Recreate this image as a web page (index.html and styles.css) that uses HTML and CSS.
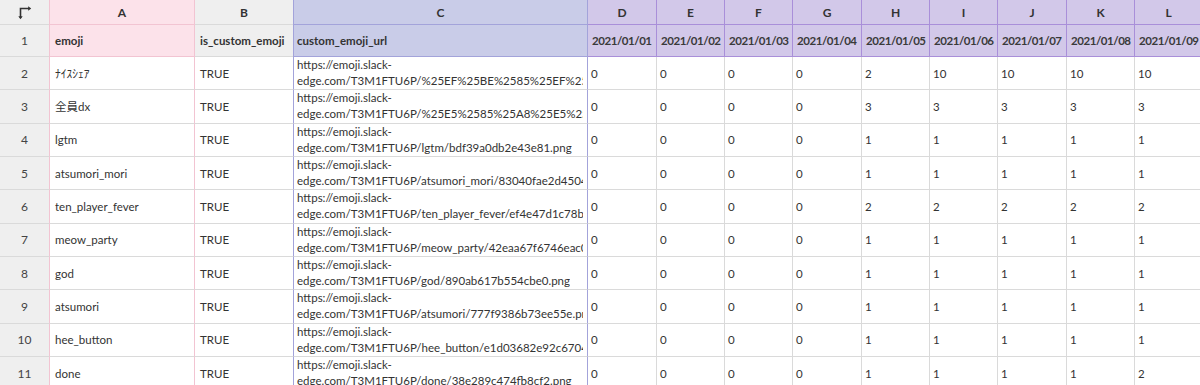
FILE: index.html
```html
<!DOCTYPE html>
<html lang="ja">
<head>
<meta charset="utf-8">
<title>emoji sheet</title>
<link rel="stylesheet" href="styles.css">
</head>
<body>
<div class="sheet">
  <div class="row colhead">
    <div class="cell rh corner"><svg width="14" height="14" viewBox="0 0 14 14"><path d="M2.5 12V2.5H11" fill="none" stroke="#333" stroke-width="1.6"/><path d="M0.3 10.2L2.5 13.2L4.7 10.2Z" fill="#333"/><path d="M10.2 0.3L13.2 2.5L10.2 4.7Z" fill="#333"/></svg></div>
    <div class="cell ca c-hd">A</div>
    <div class="cell cb c-hd">B</div>
    <div class="cell cc c-hd">C</div>
    <div class="cell cd c-hd">D</div>
    <div class="cell cd c-hd">E</div>
    <div class="cell cd c-hd">F</div>
    <div class="cell cd c-hd">G</div>
    <div class="cell cd c-hd">H</div>
    <div class="cell cd c-hd">I</div>
    <div class="cell cd c-hd">J</div>
    <div class="cell cd c-hd">K</div>
    <div class="cell cd c-hd">L</div>
  </div>
  <div class="row first">
    <div class="cell rh">1</div>
    <div class="cell ca hd">emoji</div>
    <div class="cell cb hd">is_custom_emoji</div>
    <div class="cell cc hd">custom_emoji_url</div>
    <div class="cell cd hd date">2021/01/01</div>
    <div class="cell cd hd date">2021/01/02</div>
    <div class="cell cd hd date">2021/01/03</div>
    <div class="cell cd hd date">2021/01/04</div>
    <div class="cell cd hd date">2021/01/05</div>
    <div class="cell cd hd date">2021/01/06</div>
    <div class="cell cd hd date">2021/01/07</div>
    <div class="cell cd hd date">2021/01/08</div>
    <div class="cell cd hd date">2021/01/09</div>
  </div>
  <div class="row">
    <div class="cell rh">2</div>
    <div class="cell ca">ﾅｲｽｼｪｱ</div>
    <div class="cell cb">TRUE</div>
    <div class="cell cc url"><span>https://emoji.slack-</span><span>edge.com/T3M1FTU6P/%25EF%25BE%2585%25EF%25BD%25B2%25EF%25BD%25BD.png</span></div>
    <div class="cell cd">0</div><div class="cell cd">0</div><div class="cell cd">0</div><div class="cell cd">0</div><div class="cell cd">2</div><div class="cell cd">10</div><div class="cell cd">10</div><div class="cell cd">10</div><div class="cell cd">10</div>
  </div>
  <div class="row">
    <div class="cell rh">3</div>
    <div class="cell ca">全員dx</div>
    <div class="cell cb">TRUE</div>
    <div class="cell cc url"><span>https://emoji.slack-</span><span>edge.com/T3M1FTU6P/%25E5%2585%25A8%25E5%2593%25A1dx.png</span></div>
    <div class="cell cd">0</div><div class="cell cd">0</div><div class="cell cd">0</div><div class="cell cd">0</div><div class="cell cd">3</div><div class="cell cd">3</div><div class="cell cd">3</div><div class="cell cd">3</div><div class="cell cd">3</div>
  </div>
  <div class="row">
    <div class="cell rh">4</div>
    <div class="cell ca">lgtm</div>
    <div class="cell cb">TRUE</div>
    <div class="cell cc url"><span>https://emoji.slack-</span><span>edge.com/T3M1FTU6P/lgtm/bdf39a0db2e43e81.png</span></div>
    <div class="cell cd">0</div><div class="cell cd">0</div><div class="cell cd">0</div><div class="cell cd">0</div><div class="cell cd">1</div><div class="cell cd">1</div><div class="cell cd">1</div><div class="cell cd">1</div><div class="cell cd">1</div>
  </div>
  <div class="row">
    <div class="cell rh">5</div>
    <div class="cell ca">atsumori_mori</div>
    <div class="cell cb">TRUE</div>
    <div class="cell cc url"><span>https://emoji.slack-</span><span>edge.com/T3M1FTU6P/atsumori_mori/83040fae2d450402.png</span></div>
    <div class="cell cd">0</div><div class="cell cd">0</div><div class="cell cd">0</div><div class="cell cd">0</div><div class="cell cd">1</div><div class="cell cd">1</div><div class="cell cd">1</div><div class="cell cd">1</div><div class="cell cd">1</div>
  </div>
  <div class="row">
    <div class="cell rh">6</div>
    <div class="cell ca">ten_player_fever</div>
    <div class="cell cb">TRUE</div>
    <div class="cell cc url"><span>https://emoji.slack-</span><span>edge.com/T3M1FTU6P/ten_player_fever/ef4e47d1c78b8a21.png</span></div>
    <div class="cell cd">0</div><div class="cell cd">0</div><div class="cell cd">0</div><div class="cell cd">0</div><div class="cell cd">2</div><div class="cell cd">2</div><div class="cell cd">2</div><div class="cell cd">2</div><div class="cell cd">2</div>
  </div>
  <div class="row">
    <div class="cell rh">7</div>
    <div class="cell ca">meow_party</div>
    <div class="cell cb">TRUE</div>
    <div class="cell cc url"><span>https://emoji.slack-</span><span>edge.com/T3M1FTU6P/meow_party/42eaa67f6746eac0.png</span></div>
    <div class="cell cd">0</div><div class="cell cd">0</div><div class="cell cd">0</div><div class="cell cd">0</div><div class="cell cd">1</div><div class="cell cd">1</div><div class="cell cd">1</div><div class="cell cd">1</div><div class="cell cd">1</div>
  </div>
  <div class="row">
    <div class="cell rh">8</div>
    <div class="cell ca">god</div>
    <div class="cell cb">TRUE</div>
    <div class="cell cc url"><span>https://emoji.slack-</span><span>edge.com/T3M1FTU6P/god/890ab617b554cbe0.png</span></div>
    <div class="cell cd">0</div><div class="cell cd">0</div><div class="cell cd">0</div><div class="cell cd">0</div><div class="cell cd">1</div><div class="cell cd">1</div><div class="cell cd">1</div><div class="cell cd">1</div><div class="cell cd">1</div>
  </div>
  <div class="row">
    <div class="cell rh">9</div>
    <div class="cell ca">atsumori</div>
    <div class="cell cb">TRUE</div>
    <div class="cell cc url"><span>https://emoji.slack-</span><span>edge.com/T3M1FTU6P/atsumori/777f9386b73ee55e.png</span></div>
    <div class="cell cd">0</div><div class="cell cd">0</div><div class="cell cd">0</div><div class="cell cd">0</div><div class="cell cd">1</div><div class="cell cd">1</div><div class="cell cd">1</div><div class="cell cd">1</div><div class="cell cd">1</div>
  </div>
  <div class="row">
    <div class="cell rh">10</div>
    <div class="cell ca">hee_button</div>
    <div class="cell cb">TRUE</div>
    <div class="cell cc url"><span>https://emoji.slack-</span><span>edge.com/T3M1FTU6P/hee_button/e1d03682e92c6704.png</span></div>
    <div class="cell cd">0</div><div class="cell cd">0</div><div class="cell cd">0</div><div class="cell cd">0</div><div class="cell cd">1</div><div class="cell cd">1</div><div class="cell cd">1</div><div class="cell cd">1</div><div class="cell cd">1</div>
  </div>
  <div class="row">
    <div class="cell rh">11</div>
    <div class="cell ca">done</div>
    <div class="cell cb">TRUE</div>
    <div class="cell cc url"><span>https://emoji.slack-</span><span>edge.com/T3M1FTU6P/done/38e289c474fb8cf2.png</span></div>
    <div class="cell cd">0</div><div class="cell cd">0</div><div class="cell cd">0</div><div class="cell cd">0</div><div class="cell cd">1</div><div class="cell cd">1</div><div class="cell cd">1</div><div class="cell cd">1</div><div class="cell cd">2</div>
  </div>
</div>
</body>
</html>
```

FILE: styles.css
```css
html, body {
  margin: 0;
  padding: 0;
  background: #ffffff;
  overflow: hidden;
}
.sheet {
  width: 1210px;
  font-family: Lato, "Noto Sans CJK JP", sans-serif;
  font-size: 11.5px;
  color: #333333;
}
.row {
  display: grid;
  grid-template-columns: 49px 146px 98px 295px 69px 68px 68px 69px 68px 68px 69px 68px 68px;
  height: 33.33px;
}
.row.colhead { height: 25px; }
.row.first { height: 32px; }
.cell {
  box-sizing: border-box;
  display: flex;
  align-items: center;
  padding: 0 4px;
  overflow: hidden;
  white-space: nowrap;
  border-bottom: 1px solid #dadada;
  background: #ffffff;
}
.rh {
  background: #efefef;
  justify-content: center;
  color: #444;
  padding: 0;
  font-size: 12px;
}
.corner { padding-top: 1px; }
.ca {
  border-left: 1px solid #f2c4d2;
  border-right: 1px solid #f2c4d2;
  padding-left: 5px;
}
.cb { padding-left: 5px; }
.cc {
  border-left: 1px solid #a3a3da;
  border-right: 1px solid #a3a3da;
  padding-left: 3px;
}
.cd {
  border-right: 1px solid #dadada;
  padding-left: 3px;
}
.c-hd {
  justify-content: center;
  font-weight: 700;
  padding: 0;
  font-size: 12px;
}
.hd { font-weight: 700; }
.date {
  letter-spacing: -0.45px;
  padding-left: 4px;
  color: #3a3a3a;
}
.colhead .cb, .first .cb { background: #efefef; }
.colhead .ca, .first .ca {
  background: #fce2ea;
  border-bottom-color: #f2c4d2;
}
.colhead .cc, .first .cc {
  background: #c9cce8;
  border-bottom-color: #a3a3da;
}
.colhead .cd, .first .cd {
  background: #d2c8e9;
  border-right-color: #a98fd9;
  border-bottom-color: #a98fd9;
}
.url {
  flex-direction: column;
  align-items: flex-start;
  justify-content: center;
  line-height: 16px;
}
.url span {
  display: block;
  white-space: nowrap;
  max-width: 100%;
  overflow: hidden;
}
```
